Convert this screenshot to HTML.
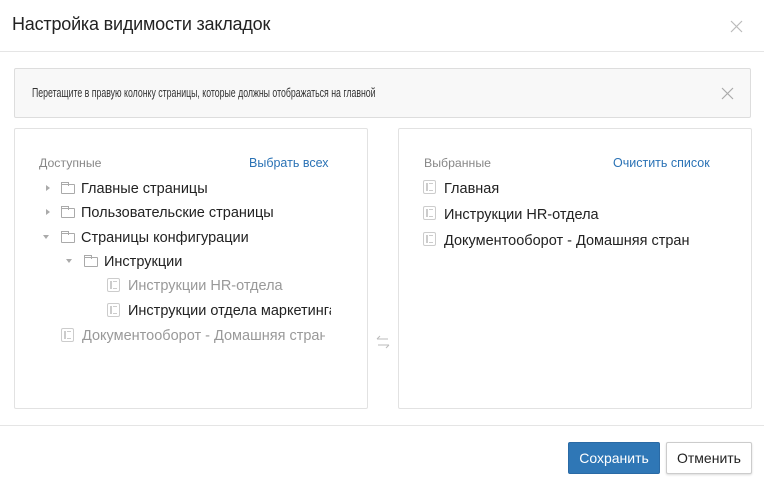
<!DOCTYPE html>
<html><head><meta charset="utf-8"><style>
*{margin:0;padding:0;box-sizing:border-box}
body{width:764px;height:487px;background:#fff;font-family:"Liberation Sans","DejaVu Sans",sans-serif;color:#222;position:relative;overflow:hidden}
.a{position:absolute;white-space:nowrap}
.t{font-size:18px;left:12px;top:14px;color:#222;letter-spacing:-0.2px}
.hl{position:absolute;left:0;width:764px;height:1px;background:#e5e5e5}
.alert{position:absolute;left:14px;top:68px;width:737px;height:50px;background:#f8f8f8;border:1px solid #ddd;border-radius:2px}
.panel{position:absolute;top:128px;height:281px;border:1px solid #e2e2e2;border-radius:2px}
.lbl{font-size:12.3px;color:#888}
.lnk{font-size:12.5px;color:#2a72b5}
.it{font-size:14.5px;color:#222}
.g{color:#999}
.pg{position:absolute;width:13px;height:14px;border:1.5px solid #ccc;border-radius:2px}
.pg:before{content:"";position:absolute;left:2px;top:1.5px;width:1.5px;height:8px;background:#ccc}
.pg:after{content:"";position:absolute;left:5px;top:1.5px;width:4px;height:6px;border-top:1.5px solid #ccc;border-bottom:1.5px solid #ccc}
.fd{position:absolute;width:14px;height:10px;border:1px solid #aaa;border-radius:1px}
.fd:before{content:"";position:absolute;left:-1px;top:-3px;width:6px;height:3px;border:1px solid #aaa;border-bottom:none}
.tr{position:absolute;width:0;height:0;border-left:4px solid #aaa;border-top:3.5px solid transparent;border-bottom:3.5px solid transparent}
.td{position:absolute;width:0;height:0;border-top:4px solid #aaa;border-left:3.5px solid transparent;border-right:3.5px solid transparent}
.btn{position:absolute;top:442px;height:32px;font-size:14px;line-height:30px;text-align:center;border-radius:2px}
</style></head><body>
<div class="a t">Настройка видимости закладок</div>
<svg class="a" style="left:730px;top:20px" width="13" height="13"><path d="M1 1L12 12M12 1L1 12" stroke="#bbb" stroke-width="1.2"/></svg>
<div class="hl" style="top:51px"></div>
<div class="alert"></div>
<div class="a" style="left:32px;top:86px;font-size:12.5px;color:#333;transform:scaleX(0.7);transform-origin:0 0">Перетащите в правую колонку страницы, которые должны отображаться на главной</div>
<svg class="a" style="left:721px;top:87px" width="13" height="13"><path d="M1 1L12 12M12 1L1 12" stroke="#aaa" stroke-width="1.2"/></svg>

<div class="panel" style="left:14px;width:354px"></div>
<div class="a lbl" style="left:39px;top:156px">Доступные</div>
<div class="a lnk" style="left:249px;top:156px">Выбрать всех</div>

<div class="tr" style="left:46px;top:185px"></div><div class="fd" style="left:61px;top:184px"></div><div class="a it" style="left:81px;top:181px">Главные страницы</div>
<div class="tr" style="left:46px;top:209px"></div><div class="fd" style="left:61px;top:208px"></div><div class="a it" style="left:81px;top:205px">Пользовательские страницы</div>
<div class="td" style="left:43px;top:235px"></div><div class="fd" style="left:61px;top:233px"></div><div class="a it" style="left:81px;top:230px">Страницы конфигурации</div>
<div class="td" style="left:66px;top:259px"></div><div class="fd" style="left:84px;top:257px"></div><div class="a it" style="left:104px;top:254px">Инструкции</div>
<div class="pg" style="left:107px;top:278px"></div><div class="a it g" style="left:128px;top:278px">Инструкции HR-отдела</div>
<div class="pg" style="left:107px;top:303px"></div><div class="a it" style="left:128px;top:303px;width:203px;overflow:hidden">Инструкции отдела маркетинга</div>
<div class="pg" style="left:61px;top:328px"></div><div class="a it g" style="left:82px;top:328px;width:243px;overflow:hidden">Документооборот - Домашняя страница</div>

<svg class="a" style="left:376px;top:335px" width="14" height="14"><path d="M1 4H12M1 4L4 1M13 10H2M13 10L10 13" stroke="#bbb" stroke-width="1" fill="none"/></svg>

<div class="panel" style="left:398px;width:354px"></div>
<div class="a lbl" style="left:424px;top:156px">Выбранные</div>
<div class="a lnk" style="left:613px;top:156px">Очистить список</div>
<div class="pg" style="left:423px;top:180px"></div><div class="a it" style="left:444px;top:181px">Главная</div>
<div class="pg" style="left:423px;top:206px"></div><div class="a it" style="left:444px;top:207px">Инструкции HR-отдела</div>
<div class="pg" style="left:423px;top:232px"></div><div class="a it" style="left:444px;top:233px">Документооборот - Домашняя стран</div>

<div class="hl" style="top:425px"></div>
<div class="btn" style="left:568px;width:92px;background:#2f77b6;color:#fff;border:1px solid #2a6aa5">Сохранить</div>
<div class="btn" style="left:666px;width:86px;background:#fff;color:#222;border:1px solid #ccc;box-shadow:0 1px 2px rgba(0,0,0,.15)">Отменить</div>
</body></html>
